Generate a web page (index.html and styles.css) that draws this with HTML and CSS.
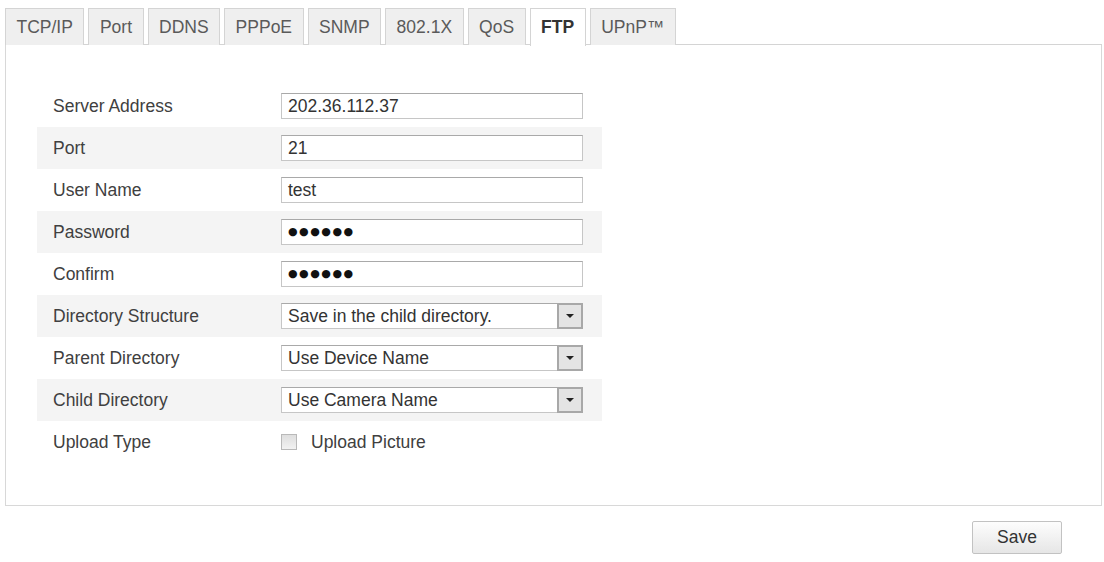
FILE: index.html
```html
<!DOCTYPE html>
<html lang="en">
<head>
  <meta charset="UTF-8">
  <title>Network - FTP</title>
  <link rel="stylesheet" href="styles.css">
</head>
<body>

  <div class="page">
    <div class="tabs">
      <div class="tab">TCP/IP</div>
      <div class="tab">Port</div>
      <div class="tab">DDNS</div>
      <div class="tab">PPPoE</div>
      <div class="tab">SNMP</div>
      <div class="tab">802.1X</div>
      <div class="tab">QoS</div>
      <div class="tab active">FTP</div>
      <div class="tab">UPnP™</div>
      <div class="tab-fill"></div>
    </div>

    <div class="panel">
      <div class="rows">
        <div class="row">
          <span class="label">Server Address</span>
          <span class="field">202.36.112.37</span>
        </div>
        <div class="row alt">
          <span class="label">Port</span>
          <span class="field">21</span>
        </div>
        <div class="row">
          <span class="label">User Name</span>
          <span class="field">test</span>
        </div>
        <div class="row alt">
          <span class="label">Password</span>
          <span class="field dots">●●●●●●</span>
        </div>
        <div class="row">
          <span class="label">Confirm</span>
          <span class="field dots">●●●●●●</span>
        </div>
        <div class="row alt">
          <span class="label">Directory Structure</span>
          <span class="field select">Save in the child directory.<span class="arrow"></span></span>
        </div>
        <div class="row">
          <span class="label">Parent Directory</span>
          <span class="field select">Use Device Name<span class="arrow"></span></span>
        </div>
        <div class="row alt">
          <span class="label">Child Directory</span>
          <span class="field select">Use Camera Name<span class="arrow"></span></span>
        </div>
        <div class="row">
          <span class="label">Upload Type</span>
          <span class="check"><span class="box"></span>Upload Picture</span>
        </div>
      </div>
    </div>

    <div class="actions">
      <button class="save">Save</button>
    </div>
  </div>

</body>
</html>
```

FILE: styles.css
```css
body {
  font-family: "Liberation Sans", Arial, sans-serif;
  font-size: 17.5px;
  color: #404040;
  margin: 0;
  background: #fff;
}
.page {
  padding: 8px 2px 0 5px;
}
.tabs {
  display: flex;
  gap: 4px;
  height: 37px;
}
.tab {
  height: 36px;
  line-height: 36px;
  padding: 0 10.5px;
  background: #efefef;
  border: 1px solid #d4d4d4;
  border-bottom: none;
  color: #5a5a5a;
}
.tab.active {
  background: #fff;
  color: #333;
  font-weight: bold;
  height: 37px;
  position: relative;
  z-index: 1;
}
.tab-fill {
  flex: 1;
  border-bottom: 1px solid #d4d4d4;
}
.panel {
  border: 1px solid #d8d8d8;
  border-top: 1px solid #d4d4d4;
  margin-top: -1px;
  height: 462px;
  box-sizing: border-box;
  padding: 40px 0 0 31px;
}
.rows {
  width: 565px;
}
.row {
  display: flex;
  align-items: center;
  height: 42px;
}
.row.alt {
  background: #f4f4f4;
}
.label {
  width: 228px;
  padding-left: 16px;
}
.field {
  position: relative;
  height: 26px;
  line-height: 24px;
  padding-left: 6px;
  box-sizing: border-box;
  width: 302px;
  background: #fff;
  border: 1px solid #c6c6c6;
  border-top-color: #a9a9a9;
  color: #333;
}
.field.dots {
  font-family: "DejaVu Sans", sans-serif;
  font-size: 11px;
  letter-spacing: 1.5px;
  color: #111;
}
.arrow {
  position: absolute;
  right: -1px;
  top: -1px;
  width: 26px;
  height: 26px;
  box-sizing: border-box;
  border: 2px solid #a8a8a8;
  background: #e4e4e4;
}
.arrow::after {
  content: "";
  position: absolute;
  left: 7px;
  top: 9px;
  border-left: 4px solid transparent;
  border-right: 4px solid transparent;
  border-top: 4px solid #222;
}
.check {
  display: flex;
  align-items: center;
  gap: 14px;
}
.box {
  width: 16px;
  height: 16px;
  box-sizing: border-box;
  border: 1px solid #b9b9b9;
  background: linear-gradient(#dedede, #f2f2f2);
}
.actions {
  display: flex;
  justify-content: flex-end;
  padding: 15px 40px 0 0;
}
.save {
  width: 90px;
  height: 33px;
  font-family: "Liberation Sans", Arial, sans-serif;
  font-size: 17.5px;
  color: #333;
  border: 1px solid #c2c2c2;
  border-radius: 2px;
  background: linear-gradient(#fdfdfd, #e6e6e6);
  cursor: pointer;
}
```
